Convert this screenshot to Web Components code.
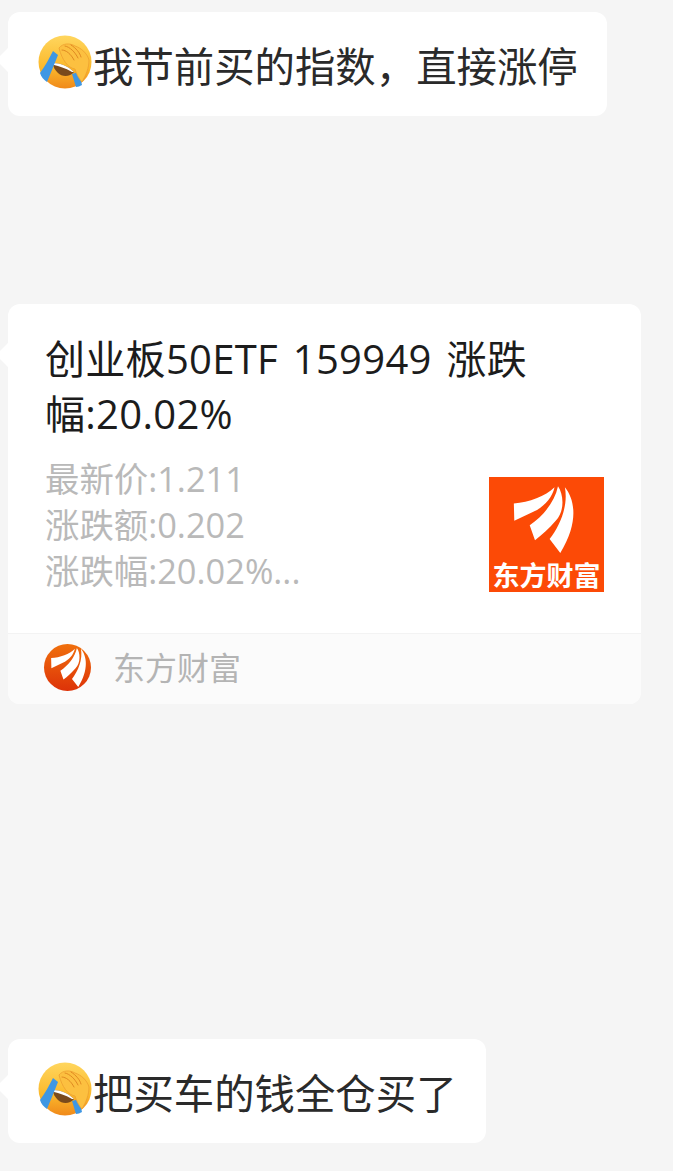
<!DOCTYPE html>
<html lang="zh">
<head>
<meta charset="utf-8">
<title>chat</title>
<style>
  html, body { margin: 0; padding: 0; background: #f5f5f5; }
  body { font-family: "Open Sans", "Noto Sans CJK SC", sans-serif; }
  .page { display: flex; flex-direction: column; align-items: flex-start; padding: 12px 0 0 8px; height: 1159px; overflow: hidden; }
  .mid { margin-top: 188px; }
  .last { margin-top: 335px; }
</style>
</head>
<body>
<div class="page">
  <chat-bubble><palm-emoji></palm-emoji>我节前买的指数，直接涨停</chat-bubble>
  <link-card class="mid" source="东方财富">
    <span slot="title">创业板50ETF 159949 涨跌幅:20.02%</span>
    <span slot="desc">最新价:1.211<br>涨跌额:0.202<br>涨跌幅:20.02%...</span>
  </link-card>
  <chat-bubble class="last"><palm-emoji></palm-emoji>把买车的钱全仓买了</chat-bubble>
</div>

<script>
// swoosh of the logo, drawn on a 100x100 box
const SWOOSH = `
  <path d="M21.6 23C35 22 49 17 57 9C55 18 48 26 39 30L22 38Z"/>
  <path d="M60 8C65 15 66 30 58 38C52 45 46 50 40 55L35.4 42C47 34 57 22 60 8Z"/>
  <path d="M66 9C75 20 78 40 62 66L52.7 54C62 42 69 25 66 9Z"/>`;

class ChatBubble extends HTMLElement {
  constructor() {
    super();
    this.attachShadow({ mode: 'open' });
    this.shadowRoot.innerHTML = `
      <style>
        :host {
          display: inline-flex; align-items: center; position: relative;
          box-sizing: border-box; height: 104px; padding: 6px 29px 0 30px;
          background: #fff; border-radius: 12px;
          font-size: 40.4px; line-height: 54px; color: #2a2a2a; white-space: nowrap;
        }
        :host::before {
          content: ""; position: absolute; left: -7px; top: 36px;
          width: 24px; height: 24px; background: #fff; border-radius: 5px;
          transform: rotate(45deg); z-index: 0;
        }
        .text { position: relative; display: flex; align-items: center; gap: 1px; }
      </style>
      <div class="text"><slot></slot></div>`;
  }
}

class PalmEmoji extends HTMLElement {
  constructor() {
    super();
    this.attachShadow({ mode: 'open' });
    this.shadowRoot.innerHTML = `
      <style>:host { display: block; width: 54px; height: 54px; flex: none; margin-bottom: 10px; } svg { display: block; }</style>
      <svg viewBox="0 0 54 54" width="54" height="54">
        <defs>
          <linearGradient id="face" x1="0" y1="0" x2="0" y2="1">
            <stop offset="0" stop-color="#ffd65e"/>
            <stop offset=".6" stop-color="#fbb92c"/>
            <stop offset="1" stop-color="#f0891a"/>
          </linearGradient>
        </defs>
        <circle cx="27" cy="27" r="26.5" fill="url(#face)"/>
        <path d="M15 28C22 28 30 31 36 37C32 42 24 42 20 38C17 35 15 32 15 28Z" fill="#7a4a1c"/>
        <path d="M15 28C22 28 30 31 36 37L34 37C27 33 21 31 16 30Z" fill="#fff"/>
        <path d="M15 16L20 20C16 30 12 40 9 47C6 45 3 42 2 38C7 31 11 24 15 16Z" fill="#3f97e3"/>
        <path d="M34 39L41 37L44 50C42 51 40 52 38 52Z" fill="#3f97e3"/>
        <path d="M21 13C25 8 32 8 37 11C43 13 49 18 51 25C51 33 48 40 44 47C41 44 38 38 37 34C30 33 24 25 21 13Z" fill="#fcc040" stroke="#ee9f30" stroke-width=".8"/>
        <path d="M24 15C28 15 33 19 36 25M27 11C32 12 37 17 40 23M33 10C38 13 42 18 43 22" fill="none" stroke="#e08a22" stroke-width="1" stroke-linecap="round"/>
      </svg>`;
  }
}

class LinkCard extends HTMLElement {
  constructor() {
    super();
    this.attachShadow({ mode: 'open' });
    this.shadowRoot.innerHTML = `
      <style>
        :host {
          display: block; position: relative; box-sizing: border-box;
          width: 633px; height: 400px; background: #fff; border-radius: 12px;
        }
        :host::before {
          content: ""; position: absolute; left: -7px; top: 39px;
          width: 24px; height: 24px; background: #fff; border-radius: 5px;
          transform: rotate(45deg);
        }
        .inner { position: relative; display: flex; flex-direction: column; height: 100%; }
        .body { flex: 1; padding: 27px 37px 0; }
        .title { font-size: 40px; line-height: 55px; color: #1c1c1c; width: 500px; letter-spacing: .3px; word-spacing: 4px; }
        .row { display: flex; justify-content: space-between; margin-top: 15px; }
        .desc { font-size: 34.4px; line-height: 46px; color: #b9b9b9; }
        .thumb { margin-top: 21px; }
        .foot {
          display: flex; align-items: center; gap: 22px; height: 71px; box-sizing: border-box;
          padding: 0 0 3px 36px; background: #fbfbfb; border-top: 1px solid #f3f3f3;
          border-radius: 0 0 12px 12px; font-size: 32px; color: #b4b4b4;
        }
        #src { margin-bottom: 3px; }
      </style>
      <div class="inner">
        <div class="body">
          <div class="title"><slot name="title"></slot></div>
          <div class="row">
            <div class="desc"><slot name="desc"></slot></div>
            <df-logo class="thumb"></df-logo>
          </div>
        </div>
        <div class="foot"><df-badge></df-badge><span id="src"></span></div>
      </div>`;
    this.shadowRoot.getElementById('src').textContent = this.getAttribute('source') || '';
  }
}

class DfLogo extends HTMLElement {
  constructor() {
    super();
    this.attachShadow({ mode: 'open' });
    this.shadowRoot.innerHTML = `
      <style>
        :host {
          display: flex; flex-direction: column; align-items: center; flex: none;
          width: 115px; height: 115px; background: #fc4a06; color: #fff; overflow: hidden;
        }
        svg { display: block; fill: #fff; flex: none; }
        .name { font-size: 27px; line-height: 32px; font-weight: 700; white-space: nowrap; margin-top: 2px; }
      </style>
      <svg viewBox="0 0 100 70" width="115" height="80.5">${SWOOSH}</svg>
      <div class="name">东方财富</div>`;
  }
}

class DfBadge extends HTMLElement {
  constructor() {
    super();
    this.attachShadow({ mode: 'open' });
    this.shadowRoot.innerHTML = `
      <style>
        :host { display: block; width: 47px; height: 47px; flex: none; border-radius: 50%;
          background: linear-gradient(#f0700d, #dd3208); }
        svg { display: block; fill: #fff; }
      </style>
      <svg viewBox="11 2 70 70" width="47" height="47">${SWOOSH}</svg>`;
  }
}

customElements.define('chat-bubble', ChatBubble);
customElements.define('palm-emoji', PalmEmoji);
customElements.define('link-card', LinkCard);
customElements.define('df-logo', DfLogo);
customElements.define('df-badge', DfBadge);
</script>
</body>
</html>
